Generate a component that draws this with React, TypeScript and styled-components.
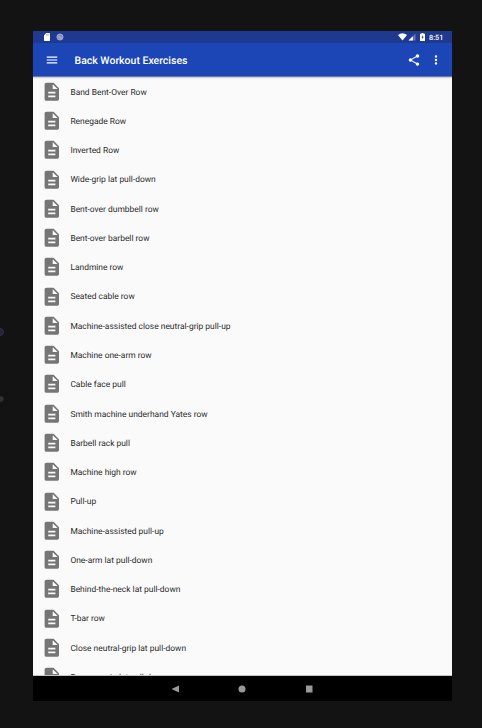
import React from "react";
import styled, { createGlobalStyle } from "styled-components";

const Global = createGlobalStyle`
  * { box-sizing: border-box; }
  html, body { margin: 0; background: #131313; overflow: hidden; }
`;

const Stage = styled.div`
  position: relative;
  width: 482px;
  height: 728px;
  padding: 31px 30px 27px 33px;
  background: #131313;
  font-family: Roboto, "Liberation Sans", sans-serif;
  text-rendering: geometricPrecision;
`;

const Knob = styled.div<{ $y: number; $r: number; $color: string; $ring: string }>`
  position: absolute;
  left: ${(p) => 4 - p.$r * 2}px;
  top: ${(p) => p.$y - p.$r}px;
  width: ${(p) => p.$r * 2}px;
  height: ${(p) => p.$r * 2}px;
  border-radius: 50%;
  background: ${(p) => p.$color};
  border: 1px solid ${(p) => p.$ring};
`;

const Screen = styled.main`
  display: flex;
  flex-direction: column;
  width: 419px;
  height: 670px;
  background: #fafafa;
`;

const StatusBar = styled.div`
  display: flex;
  align-items: center;
  flex: 0 0 12px;
  padding: 0 9px 0 11px;
  background: #1f3890;
  color: #fff;
  svg { display: block; }
`;

const StatusIcons = styled.div`
  display: flex;
  align-items: center;
  gap: 6px;
`;

const StatusRight = styled.div`
  display: flex;
  align-items: center;
  margin-left: auto;
`;

const Clock = styled.span`
  width: 14px;
  height: 12px;
  margin-left: 4px;
  padding-top: 1px;
  font-size: 7.3px;
  line-height: 12px;
  font-weight: 500;
  white-space: nowrap;
`;

const Toolbar = styled.header`
  z-index: 1;
  display: flex;
  align-items: center;
  flex: 0 0 33px;
  padding: 0 9px 0 11.5px;
  background: #1c46b5;
  color: #fff;
  box-shadow: 0 1px 1px rgba(30, 50, 130, 0.6), 0 2px 2px rgba(0, 0, 0, 0.12);
  svg { display: block; fill: currentColor; }
`;

const Title = styled.h1`
  margin: 0 auto 0 16px;
  padding-top: 2px;
  font-size: 10.5px;
  line-height: 14px;
  font-weight: 500;
  white-space: nowrap;
`;

const Actions = styled.div`
  display: flex;
  align-items: center;
  gap: 8px;
`;

const List = styled.ul`
  flex: 1;
  min-height: 0;
  margin: 0;
  padding: 1px 0 0;
  list-style: none;
  overflow: hidden;
  border-bottom: 1px solid #c4c4c4;
`;

const Row = styled.li`
  display: flex;
  align-items: center;
  height: 29.28px;
  padding-left: 7.8px;
  svg { flex: none; fill: #757575; margin-right: 8px; }
`;

const Label = styled.span`
  padding-top: 1.9px;
  color: #2b2b2b;
  font-size: 8.44px;
  line-height: 12px;
  white-space: nowrap;
`;

const NavBar = styled.nav`
  display: flex;
  align-items: center;
  justify-content: center;
  gap: 57px;
  flex: 0 0 25px;
  padding-right: 1px;
  background: #000;
  svg { display: block; fill: #999; }
`;

const exercises = [
  "Band Bent-Over Row",
  "Renegade Row",
  "Inverted Row",
  "Wide-grip lat pull-down",
  "Bent-over dumbbell row",
  "Bent-over barbell row",
  "Landmine row",
  "Seated cable row",
  "Machine-assisted close neutral-grip pull-up",
  "Machine one-arm row",
  "Cable face pull",
  "Smith machine underhand Yates row",
  "Barbell rack pull",
  "Machine high row",
  "Pull-up",
  "Machine-assisted pull-up",
  "One-arm lat pull-down",
  "Behind-the-neck lat pull-down",
  "T-bar row",
  "Close neutral-grip lat pull-down",
  "Reverse-grip lat pull-down",
];

const DocumentIcon = () => (
  <svg width="21.6" height="21.6" viewBox="0 0 24 24">
    <path d="M14 2H6c-1.1 0-2 .9-2 2v16c0 1.1.9 2 2 2h12c1.1 0 2-.9 2-2V8zm2 16H8v-2h8zm0-4H8v-2h8zm-3-5V3.5L18.5 9z" />
  </svg>
);

export default function App() {
  return (
    <Stage>
      <Global />
      <Knob $y={332} $r={4} $color="#24243a" $ring="#303052" />
      <Knob $y={398.5} $r={3} $color="#343434" $ring="#2b2b2b" />
      <Screen>
        <StatusBar>
          <StatusIcons>
            <svg width="6" height="8" viewBox="0 0 6 8">
              <path fill="#fff" d="M2.200 0H5.200q.8 0 .8.800v6.400q0 .8-.8.800H.8Q0 8 0 7.200V2.300z" />
              <path stroke="#1f3890" strokeWidth=".4" d="M2.400 1.200v1.300M3.600 1.200v1.300M4.800 1.200v1.300" />
            </svg>
            <svg width="8" height="8" viewBox="0 0 8 8">
              <circle cx="4" cy="4" r="3.100" fill="#8493bd" stroke="#a9b4d3" strokeWidth=".8" />
              <path d="M2.500 3l3 3" stroke="#c0c8de" strokeWidth=".8" />
            </svg>
          </StatusIcons>
          <StatusRight>
            <svg width="22" height="8" viewBox="0 0 22 8">
              <path fill="#fff" d="M0 2Q4.500-1.300 9 2L4.500 7.600z" />
              <path fill="#6576ae" d="M17.500 .5v7h-7z" />
              <path fill="#fff" d="M14.800 3.200v4.300h-4.300z" />
            </svg>
            <svg width="5" height="8" viewBox="0 0 5 8">
              <path fill="#fff" d="M1.500 0h2v.8H5V8H0V.8h1.500z" />
              <path fill="#1f3890" d="M2.800 2L1.500 4.500h.9v1.800l1.300-2.500h-.9z" />
            </svg>
            <Clock>8:51</Clock>
          </StatusRight>
        </StatusBar>
        <Toolbar>
          <svg width="14" height="14" viewBox="0 0 24 24">
            <path d="M3 18h18v-2H3zm0-5h18v-2H3zm0-7v2h18V6z" />
          </svg>
          <Title>Back Workout Exercises</Title>
          <Actions>
            <svg width="14" height="14" viewBox="0 0 24 24">
              <path d="M18 16.080c-.76 0-1.440.3-1.960.77L8.910 12.700c.05-.23.09-.46.09-.7s-.04-.47-.09-.7l7.050-4.110c.54.5 1.250.81 2.040.81 1.660 0 3-1.340 3-3s-1.340-3-3-3-3 1.340-3 3c0 .24.04.47.09.7L8.040 9.810C7.500 9.310 6.790 9 6 9c-1.660 0-3 1.340-3 3s1.340 3 3 3c.79 0 1.500-.31 2.040-.81l7.120 4.160c-.05.21-.08.43-.08.65 0 1.610 1.310 2.920 2.920 2.920s2.920-1.310 2.920-2.920-1.310-2.920-2.920-2.920" />
            </svg>
            <svg width="14" height="14" viewBox="0 0 24 24">
              <path d="M12 8c1.100 0 2-.9 2-2s-.9-2-2-2-2 .9-2 2 .9 2 2 2m0 2c-1.100 0-2 .9-2 2s.9 2 2 2 2-.9 2-2-.9-2-2-2m0 6c-1.100 0-2 .9-2 2s.9 2 2 2 2-.9 2-2-.9-2-2-2" />
            </svg>
          </Actions>
        </Toolbar>
        <List>
          {exercises.map((name) => (
            <Row key={name}>
              <DocumentIcon />
              <Label>{name}</Label>
            </Row>
          ))}
        </List>
        <NavBar>
          <svg width="10" height="8" viewBox="0 0 10 8"><path d="M9 .5v7L1.500 4z" /></svg>
          <svg width="10" height="8" viewBox="0 0 10 8"><circle cx="5" cy="4" r="3.500" /></svg>
          <svg width="10" height="8" viewBox="0 0 10 8"><path d="M2 .5h6.500v7H2z" /></svg>
        </NavBar>
      </Screen>
    </Stage>
  );
}
